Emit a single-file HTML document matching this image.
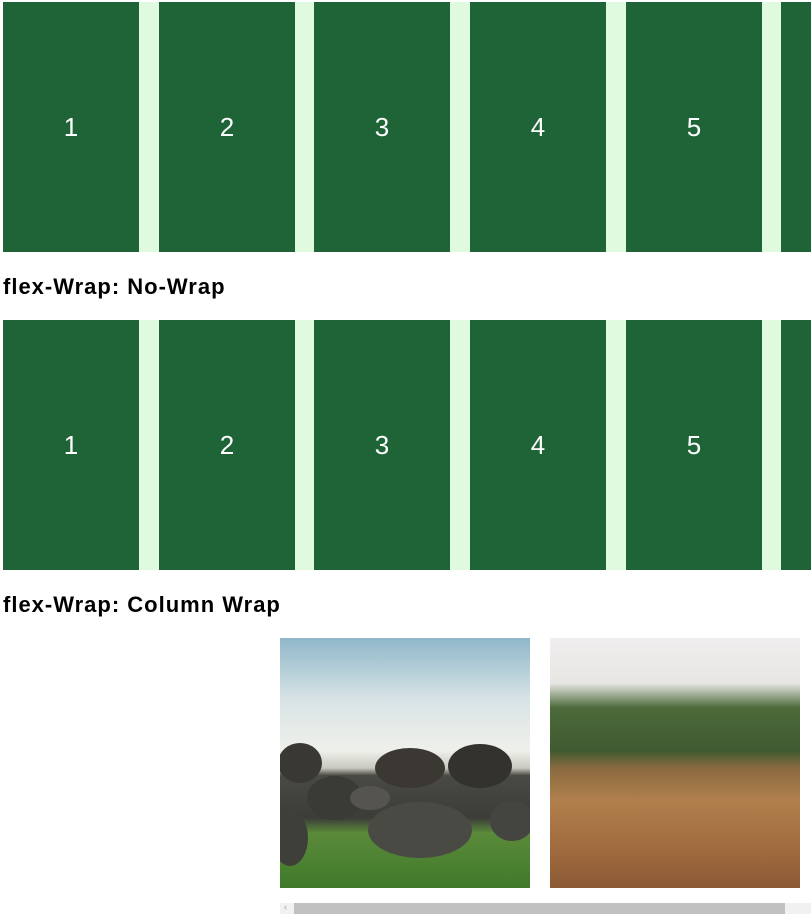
<!DOCTYPE html>
<html><head><style>
body{margin:0;background:#fff;font-family:"Liberation Sans",Arial,sans-serif;width:811px;height:914px;overflow:hidden;position:relative}
.row{position:absolute;left:3px;height:250px;width:808px;background:#e0fae0;overflow:hidden}
.b{position:absolute;top:0;width:136px;height:250px;background:#1f6437;color:#fff;font-size:26px;display:flex;align-items:center;justify-content:center;padding-top:1px;box-sizing:border-box}
h3{position:absolute;left:3px;margin:0;font-size:22px;letter-spacing:1px;font-weight:bold;color:#000}
.img{position:absolute;top:638px;width:250px;height:250px}
</style></head><body>
<div class="row" style="top:2px">
<div class="b" style="left:0">1</div><div class="b" style="left:156px">2</div><div class="b" style="left:311px">3</div><div class="b" style="left:467px">4</div><div class="b" style="left:623px">5</div><div class="b" style="left:778px"></div>
</div>
<h3 style="top:274px">flex-Wrap: No-Wrap</h3>
<div class="row" style="top:320px">
<div class="b" style="left:0">1</div><div class="b" style="left:156px">2</div><div class="b" style="left:311px">3</div><div class="b" style="left:467px">4</div><div class="b" style="left:623px">5</div><div class="b" style="left:778px"></div>
</div>
<h3 style="top:592px">flex-Wrap: Column Wrap</h3>
<div class="img" style="left:280px;background:linear-gradient(#8fb7c9 0%,#d9e4e6 25%,#eef0ea 45%,#c9c9c0 52%,#4a4a44 55%,#3c3d38 72%,#5a8a3a 78%,#3f7a2a 100%)">
<svg width="250" height="250" style="position:absolute;left:0;top:0"><ellipse cx="55" cy="160" rx="28" ry="22" fill="#3a3a36"/><ellipse cx="130" cy="130" rx="35" ry="20" fill="#3b3833"/><ellipse cx="200" cy="128" rx="32" ry="22" fill="#34322e"/><ellipse cx="140" cy="192" rx="52" ry="28" fill="#4a4a45"/><ellipse cx="10" cy="200" rx="18" ry="28" fill="#3f3f3a"/><ellipse cx="20" cy="125" rx="22" ry="20" fill="#3a3834"/><ellipse cx="232" cy="183" rx="22" ry="20" fill="#444440"/><ellipse cx="90" cy="160" rx="20" ry="12" fill="#55544f"/></svg>
</div>
<div class="img" style="left:550px;background:linear-gradient(#f0eeee 0%,#e8e6e3 18%,#4c6a3a 28%,#3f5a30 45%,#8a6a40 52%,#b0804c 65%,#a06a3e 85%,#8a5a35 100%)"></div>
<div style="position:absolute;left:280px;top:903px;width:531px;height:11px;background:#f1f1f1"></div>
<div style="position:absolute;left:294px;top:903px;width:491px;height:11px;background:#c1c1c1"></div>
<div style="position:absolute;left:284px;top:902px;font-size:9px;color:#a0a0a0">‹</div>
</body></html>
